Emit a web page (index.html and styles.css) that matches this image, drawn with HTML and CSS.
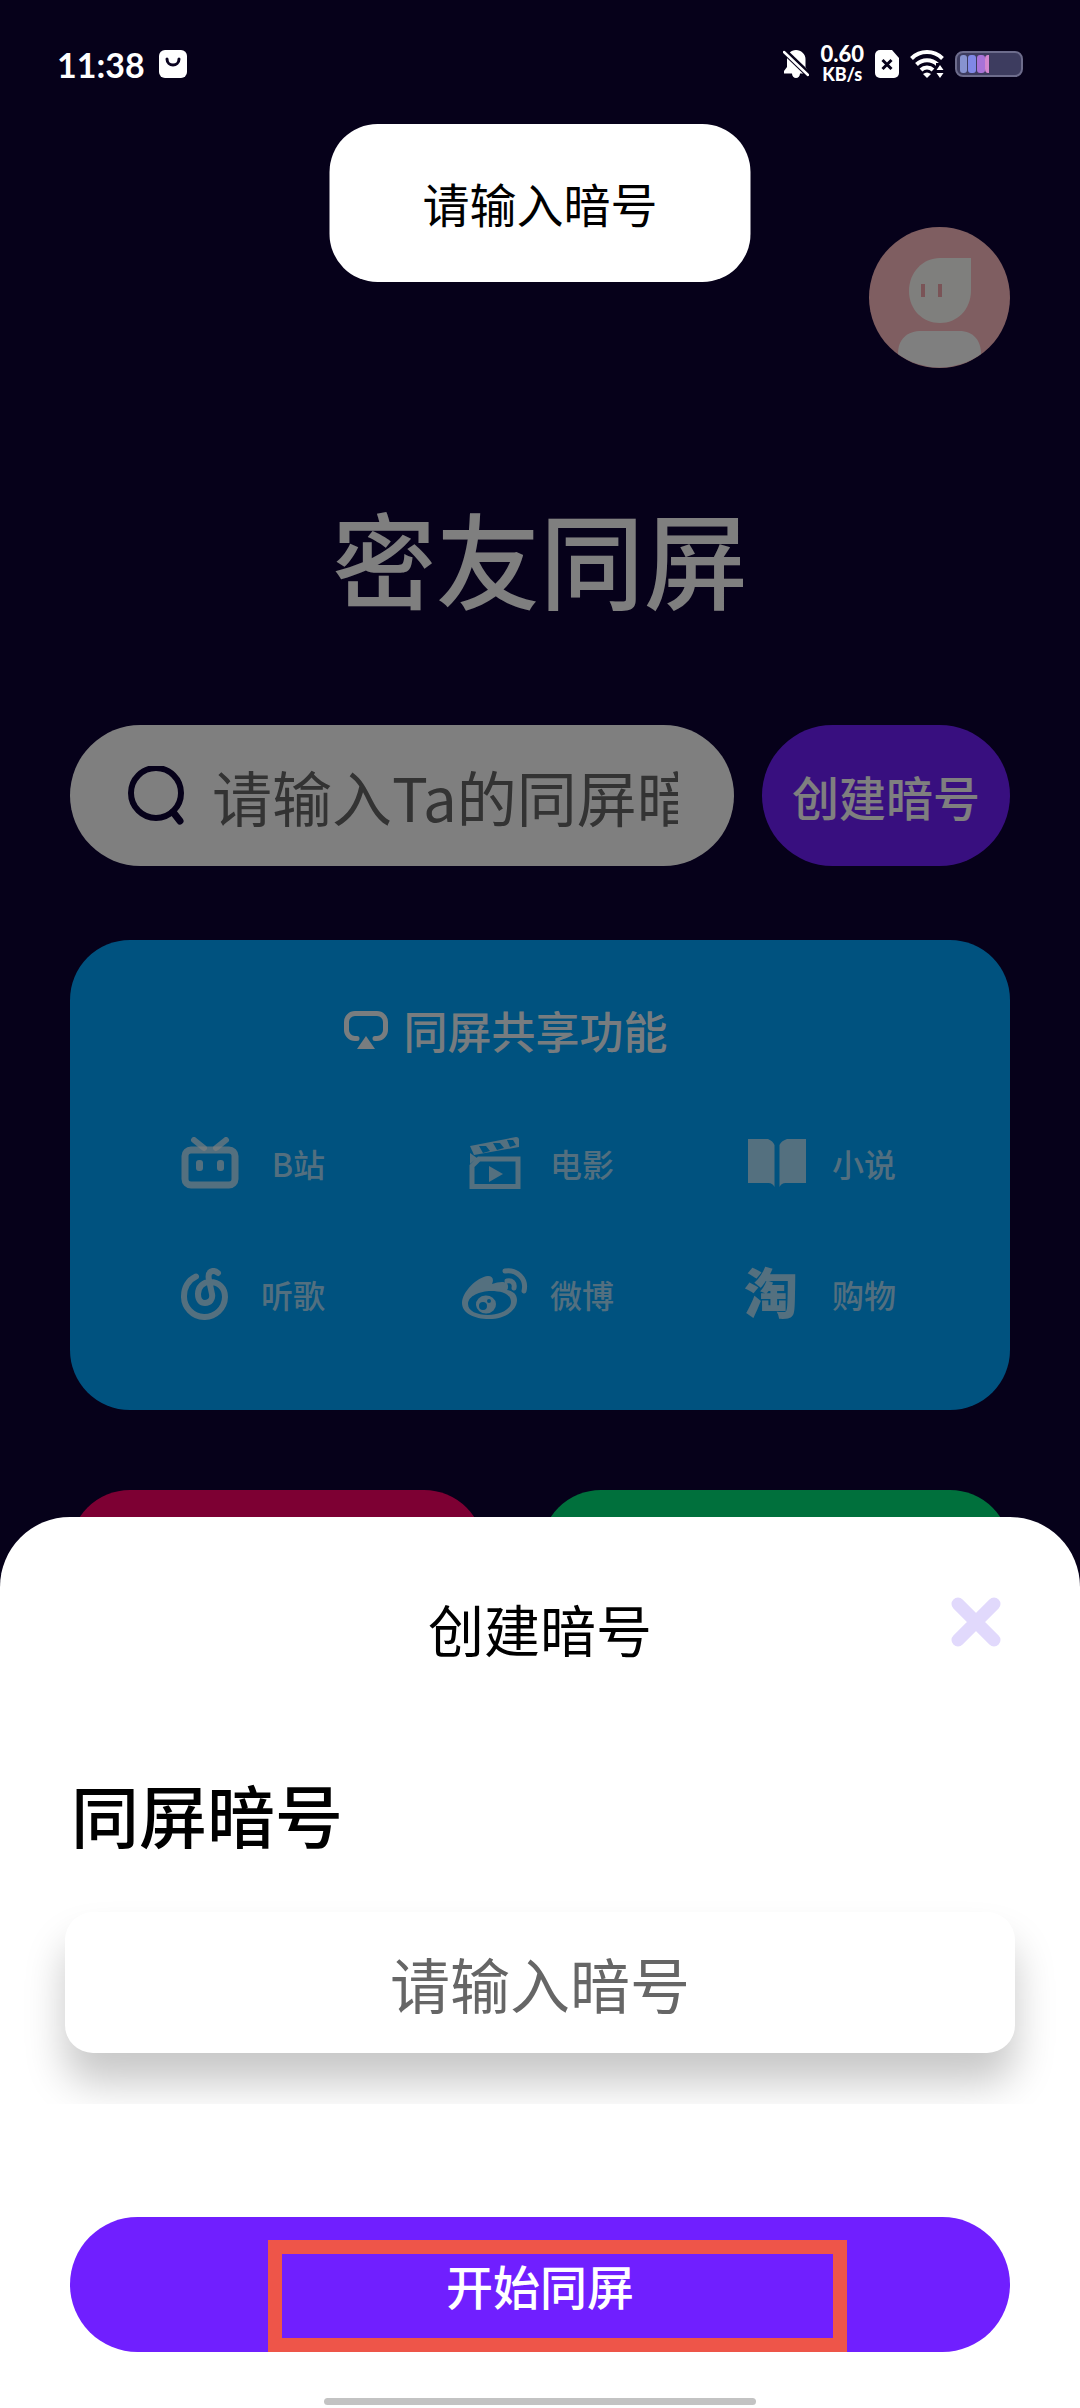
FILE: index.html
```html
<!DOCTYPE html>
<html lang="zh-CN">
<head>
<meta charset="utf-8">
<meta name="viewport" content="width=device-width, initial-scale=1">
<title>密友同屏</title>
<link rel="stylesheet" href="styles.css">
</head>
<body>
<div class="screen">
  <header class="status">
    <div class="status-side">
      <time class="clock">11:38</time>
      <svg width="28" height="28" viewBox="0 0 28 28" aria-hidden="true"><rect width="28" height="28" rx="6" fill="#fff"/><path d="M8 9c0 8 12 8 12 0" fill="none" stroke="#0a0320" stroke-width="3" stroke-linecap="round"/></svg>
    </div>
    <div class="status-side status-icons">
      <svg width="26" height="28" viewBox="0 0 26 28" aria-hidden="true"><path d="M13 0c5 0 9.500 4 9.500 9v8l2.500 4v2.500H17a4 4.500 0 0 1-8 0H1V21l3-4V9c0-5 4-9 9-9z" fill="#fff"/><path d="M0 0l26 25" stroke="#06011a" stroke-width="6"/><path d="M1 2l24 23" stroke="#fff" stroke-width="2.500" stroke-linecap="round"/></svg>
      <div class="speed"><span class="speed-value">0.60</span><span class="speed-unit">KB/s</span></div>
      <svg width="24" height="28" viewBox="0 0 24 28" aria-hidden="true"><path d="M5 0h12l7 8v15a5 5 0 0 1-5 5H5a5 5 0 0 1-5-5V5a5 5 0 0 1 5-5z" fill="#fff"/><path d="M7.500 10l9 9m0-9l-9 9" stroke="#06011a" stroke-width="3"/></svg>
      <svg width="34" height="28" viewBox="0 0 34 28" aria-hidden="true"><g fill="none" stroke="#fff" stroke-width="4"><path d="M1.500 8.500a22 22 0 0 1 31 0"/><path d="M6.500 14.500a15 15 0 0 1 21 0"/><path d="M11 20a8.500 8.500 0 0 1 12 0"/></g><path d="M13 24q4-3 8 0l-4 4z" fill="#fff"/><path d="M26 13h8v15h-8z" fill="#06011a"/><path d="M30 15l3.500 5h-7zM30 28l3.500-5h-7z" fill="#fff"/></svg>
      <svg class="battery" width="68" height="26" viewBox="0 0 68 26" aria-hidden="true"><rect x="1" y="1" width="66" height="24" rx="7" fill="#3d3c5f" stroke="#6d6c8c" stroke-width="2"/><rect x="5" y="4" width="7" height="18" rx="3" fill="#8793cf"/><rect x="13" y="4" width="8" height="18" rx="3" fill="#8088e6"/><rect x="22" y="4" width="8" height="18" rx="3" fill="#a873d8"/><path d="M34 4v18h-1q-3 0-3-4V8q0-4 3-4z" fill="#d487cf"/></svg>
    </div>
  </header>

  <main class="home">
    <a class="avatar" href="#me" aria-label="我的">
      <svg viewBox="0 0 141 141" aria-hidden="true"><circle cx="70.500" cy="70.500" r="70.500" fill="#ffbcc2"/><path d="M71 31h31v32c0 20-14 33-31 33S40 83 40 64s14-33 31-33z" fill="#fffffa"/><path d="M54 57v13M71 57v13" stroke="#f5a9ae" stroke-width="4"/><path d="M29 127c0-15 9-23 24-23h37c15 0 22 10 22 23a70.500 70.500 0 0 1-83 0z" fill="#fff"/></svg>
    </a>
    <h1 class="brand">密友同屏</h1>
    <div class="join">
      <form class="search">
        <svg width="56" height="60" viewBox="0 0 56 60" aria-hidden="true"><circle cx="28" cy="27" r="25" fill="none" stroke="#0c0234" stroke-width="6"/><path d="M45 46l7 9" stroke="#0c0234" stroke-width="7" stroke-linecap="round"/></svg>
        <input class="search-input" type="text" aria-label="同屏暗号" placeholder="请输入Ta的同屏暗号">
      </form>
      <button class="create" type="button">创建暗号</button>
    </div>

    <section class="card">
      <h2 class="card-title">
        <svg width="44" height="38" viewBox="0 0 44 38" aria-hidden="true"><path d="M13 27.500H11a8.500 8.500 0 0 1-8.500-8.500v-8A8.500 8.500 0 0 1 11 2.500h22a8.500 8.500 0 0 1 8.500 8.500v8a8.500 8.500 0 0 1-8.500 8.500h-2" fill="none" stroke="currentColor" stroke-width="5" stroke-linecap="round"/><path d="M22 25l9 13H13z" fill="currentColor"/></svg>
        同屏共享功能
      </h2>
      <ul class="features">
        <li class="feature"><span class="feature-icon feature-icon-end"><svg width="58" height="52" viewBox="0 0 58 52" aria-hidden="true"><rect x="4" y="13" width="50" height="35" rx="6" fill="none" stroke="currentColor" stroke-width="7"/><path d="M13 3l10 8M45 3l-10 8" stroke="currentColor" stroke-width="6" stroke-linecap="round"/><rect x="15" y="23" width="7" height="11" rx="3" fill="currentColor"/><rect x="36" y="23" width="7" height="11" rx="3" fill="currentColor"/></svg></span><span class="feature-name">B站</span></li>
        <li class="feature"><span class="feature-icon"><svg width="52" height="52" viewBox="0 0 52 52" aria-hidden="true"><path d="M3 49.500V29l7-7h39v27.500z" fill="none" stroke="currentColor" stroke-width="5"/><path d="M20 29l14 8-14 8z" fill="currentColor"/><path d="M1 9l46-9q3 0 3 3v7L5 18z" fill="currentColor"/><path d="M10 9h7l4 5-7 2zM24 6h7l4 5-7 2zM38 3h6l3 5-6 2z" fill="#00a4ff"/><path d="M1 16l7 5-7 6z" fill="currentColor"/></svg></span><span class="feature-name">电影</span></li>
        <li class="feature"><span class="feature-icon"><svg width="58" height="48" viewBox="0 0 58 48" aria-hidden="true"><path d="M0 0h20q5 2 6.500 6v42q-2-4-6-4H0zM58 0H39q-6 2-7.500 6v42q2-4 6-4H58z" fill="currentColor"/></svg></span><span class="feature-name">小说</span></li>
        <li class="feature"><span class="feature-icon feature-icon-start"><svg width="48" height="52" viewBox="0 0 48 52" aria-hidden="true"><path d="M15 8.500C7 12 3 20 3 28a20.500 20.500 0 0 0 41 1c0-9-6-15-15-15-7 0-12 5-12 12 0 6 3 9 7 9 5 0 8-4 7-9L28 12c-2-9 4-11 9-7" fill="none" stroke="currentColor" stroke-width="6" stroke-linecap="round"/></svg></span><span class="feature-name">听歌</span></li>
        <li class="feature"><span class="feature-icon"><svg width="66" height="52" viewBox="0 0 66 52" aria-hidden="true"><path fill="currentColor" fill-rule="evenodd" d="M0 35C0 24 15 9 26 8c5 0 6 4 4 8 8-3 16-3 16 2 0 2 0 3-1 4 7 1 10 5 10 10 0 11-13 19-28 19S0 45 0 35zm6 1c0 7 9 11 20 11s23-5 23-13-9-11-20-11S6 28 6 36z"/><path fill="currentColor" fill-rule="evenodd" d="M14 37a10 9 0 1 0 20-1a10 9 0 1 0-20 1zm3 1a4 4 0 1 1 8 0a4 4 0 1 1-8 0zm8-5a2 2 0 1 1 4 0a2 2 0 1 1-4 0z"/><path d="M43 3c12-2 22 8 19 20M45 13c5-1 8 2 7 7" fill="none" stroke="currentColor" stroke-width="5" stroke-linecap="round"/></svg></span><span class="feature-name">微博</span></li>
        <li class="feature"><span class="feature-icon feature-logo" aria-hidden="true">淘</span><span class="feature-name">购物</span></li>
      </ul>
    </section>

    <div class="tiles"><div class="tile tile-pink"></div><div class="tile tile-green"></div></div>
  </main>

  <div class="scrim"></div>
  <div class="toast" role="status">请输入暗号</div>

  <section class="sheet" role="dialog" aria-labelledby="sheet-title">
    <div class="sheet-head">
      <h2 class="sheet-title" id="sheet-title">创建暗号</h2>
      <button class="close" type="button" aria-label="关闭"><svg width="50" height="50" viewBox="0 0 50 50" aria-hidden="true"><path d="M7 7l36 36M43 7L7 43" stroke="#e1d9fc" stroke-width="13" stroke-linecap="round"/></svg></button>
    </div>
    <form>
      <div class="field">
        <label class="field-label" for="code">同屏暗号</label>
        <input class="field-input" id="code" type="text" placeholder="请输入暗号">
      </div>
      <div class="action">
        <button class="start" type="submit">开始同屏</button>
        <span class="highlight"></span>
      </div>
    </form>
    <div class="home-bar"></div>
  </section>
</div>
</body>
</html>
```
FILE: styles.css
```css
* {
  box-sizing: border-box;
}

body {
  margin: 0;
  background: #0c0234;
  font-family: "Noto Sans CJK SC", "Noto Sans", sans-serif;
}

h1, h2, ul {
  margin: 0;
  padding: 0;
}

svg {
  display: block;
  flex: none;
}

button, input {
  border: 0;
  padding: 0;
  background: none;
  font: inherit;
}

.screen {
  position: relative;
  min-height: 100vh;
  overflow: hidden;
}

/* status bar, above the scrim */
.status {
  position: relative;
  z-index: 2;
  display: flex;
  justify-content: space-between;
  height: 128px;
  padding: 0 57px;
  color: #fff;
  font-family: Lato, "Noto Sans", sans-serif;
  font-weight: 700;
}

.status-side {
  display: flex;
  align-items: center;
  gap: 14px;
}

.clock {
  font-size: 34px;
}

.status-icons {
  gap: 11px;
}

.speed {
  display: flex;
  flex-direction: column;
  align-items: center;
  font-weight: 900;
}

.speed-value {
  font-size: 22px;
  line-height: 20px;
}

.speed-unit {
  font-size: 18px;
  line-height: 20px;
}

/* home page behind the sheet */
.home {
  display: flex;
  flex-direction: column;
  padding: 99px 70px 0;
}

.avatar {
  align-self: flex-end;
  width: 141px;
}

.brand {
  margin-top: 114px;
  color: #fff;
  font-size: 104px;
  line-height: 150px;
  font-weight: 500;
  text-align: center;
}

.join {
  display: flex;
  gap: 28px;
  margin-top: 93px;
}

.search {
  flex: 1;
  min-width: 0;
  display: flex;
  align-items: center;
  gap: 28px;
  height: 141px;
  padding: 0 56px 0 58px;
  border-radius: 71px;
  background: #fff;
}

.search-input {
  flex: 1;
  min-width: 0;
  height: 100px;
  font-size: 60px;
}

.search-input::placeholder,
.field-input::placeholder {
  color: #666;
  opacity: 1;
}

.create {
  width: 248px;
  border-radius: 71px;
  background: #701fff;
  color: #fff;
  font-size: 47px;
  font-weight: 500;
}

.card {
  margin-top: 74px;
  padding: 58px 114px 84px 103px;
  border-radius: 60px;
  background: #00a4ff;
}

.card-title {
  display: flex;
  align-items: center;
  justify-content: center;
  gap: 16px;
  padding-right: 58px;
  color: rgba(255, 255, 255, 0.95);
  font-size: 44px;
  line-height: 64px;
  font-weight: 500;
}

.features {
  display: grid;
  grid-template-columns: 289fr 282fr 152px;
  row-gap: 67px;
  margin-top: 69px;
  list-style: none;
  color: rgba(255, 255, 255, 0.66);
}

.feature {
  display: flex;
  align-items: center;
  gap: 22px;
  height: 64px;
}

.feature-icon {
  display: flex;
  justify-content: center;
  width: 66px;
}

.feature-icon-start {
  justify-content: flex-start;
  padding-left: 8px;
}

.feature-icon-end {
  justify-content: flex-end;
}

.feature-logo {
  justify-content: flex-start;
  padding-bottom: 6px;
  font-size: 54px;
  line-height: 58px;
  font-weight: 900;
}

.feature-name {
  width: 64px;
  font-size: 32px;
  line-height: 48px;
  font-weight: 500;
  text-align: right;
  white-space: nowrap;
}

.tiles {
  display: flex;
  gap: 57px;
  margin-top: 80px;
}

.tile {
  height: 300px;
  border-radius: 60px;
}

.tile-pink {
  flex: 414;
  background: #fa0066;
}

.tile-green {
  flex: 469;
  background: #00e078;
}

.scrim {
  position: absolute;
  inset: 0;
  background: rgba(0, 0, 0, 0.5);
}

.toast {
  position: absolute;
  z-index: 3;
  top: 124px;
  left: 50%;
  transform: translateX(-50%);
  padding: 44px 93px;
  border-radius: 48px;
  background: #fff;
  color: #000;
  font-size: 47px;
  line-height: 70px;
  white-space: nowrap;
}

/* bottom sheet */
.sheet {
  position: absolute;
  left: 0;
  right: 0;
  bottom: 0;
  padding: 69px 0 3px;
  border-radius: 70px 70px 0 0;
  background: #fff;
  color: #000;
}

.sheet-head {
  display: grid;
  grid-template-columns: 1fr auto 1fr;
  padding: 0 79px;
}

.sheet-title {
  grid-column: 2;
  font-size: 56px;
  line-height: 84px;
  font-weight: 400;
}

.close {
  justify-self: end;
  height: 72px;
}

/* the field's shadow ends with the field area */
.field {
  overflow: hidden;
  padding: 94px 65px 51px;
}

.field-label {
  display: block;
  padding-left: 6px;
  font-size: 68px;
  line-height: 100px;
  font-weight: 500;
}

.field-input {
  display: block;
  width: 100%;
  height: 141px;
  margin-top: 48px;
  border-radius: 28px;
  background: #fff;
  box-shadow: 0 30px 40px rgba(0, 0, 0, 0.22);
  font-size: 60px;
  text-align: center;
}

.action {
  position: relative;
  margin: 113px 70px 46px;
}

.start {
  display: block;
  width: 100%;
  height: 135px;
  border-radius: 68px;
  background: #701fff;
  color: #fff;
  font-size: 47px;
  font-weight: 500;
}

.highlight {
  position: absolute;
  inset: 23px 163px 0 198px;
  border: 14px solid #ee5549;
  pointer-events: none;
}

.home-bar {
  width: 40%;
  height: 7px;
  margin: 0 auto;
  border-radius: 4px;
  background: #c3c3c3;
}
```
